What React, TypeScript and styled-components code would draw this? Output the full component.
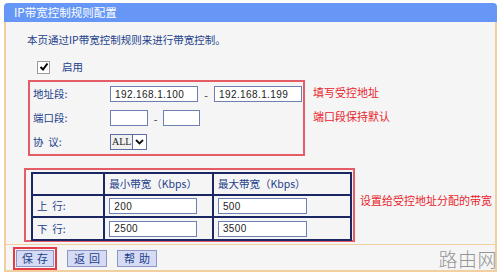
import React from 'react';
import styled, { createGlobalStyle } from 'styled-components';

const GlobalStyle = createGlobalStyle`
  body {
    margin: 0;
    background: #ffffff;
    font-family: "Noto Sans CJK SC", "Liberation Sans", sans-serif;
  }
`;

const CJK = `"Noto Sans CJK SC", "Liberation Sans", sans-serif`;
const navy = '#1b2762';
const label = '#23408a';
const red = '#e8242c';
const orange = '#f2cf9f';

const Frame = styled.div`
  width: 493px;
  margin: 3px 0 0 4px;
`;

const TitleBar = styled.div`
  height: 19px;
  background: #6797f6;
  border-radius: 4px 4px 0 0;
  color: #ffffff;
  font: 11.5px/19px ${CJK};
  padding-left: 10px;
`;

const Body = styled.div`
  height: 248px;
  background: #f5f5f5;
  border-left: 2px solid ${orange};
  border-right: 2px solid ${orange};
  border-bottom: 2px solid ${orange};
  display: flex;
  flex-direction: column;
`;

const Intro = styled.div`
  margin: 11px 0 0 21px;
  font: 10.5px/14px ${CJK};
  color: ${label};
`;

const EnableRow = styled.label`
  margin: 13px 0 0 31px;
  height: 14px;
  display: flex;
  align-items: center;
  gap: 12px;
  font: 10.5px/14px ${CJK};
  color: ${label};
`;

const CheckBox = styled.span`
  width: 11px;
  height: 11px;
  border: 1px solid #9a9a9a;
  background: #ffffff;
  display: flex;
  align-items: center;
  justify-content: center;
`;

const Section = styled.div<{ $top: number }>`
  margin-top: ${({ $top }) => $top}px;
  display: flex;
  align-items: flex-start;
`;

const RedBox = styled.div<{ $left: number; $w: number; $h: number }>`
  margin-left: ${({ $left }) => $left}px;
  width: ${({ $w }) => $w}px;
  height: ${({ $h }) => $h}px;
  box-sizing: border-box;
  border: 2px solid #e45d66;
`;

const FormRow = styled.div`
  height: 24px;
  display: flex;
  align-items: center;
  padding-left: 3px;
`;

const Label = styled.span`
  width: 77px;
  font: 10.5px/14px ${CJK};
  color: ${label};
  white-space: pre;
`;

const Input = styled.input<{ $w: number }>`
  width: ${({ $w }) => $w}px;
  height: 16px;
  box-sizing: border-box;
  border: 1px solid #6f7fb0;
  background: #ffffff;
  padding: 0 4px;
  font: 10px "Liberation Sans", sans-serif;
  letter-spacing: 0.4px;
  color: #222;
  outline: none;
`;

const Dash = styled.span<{ $w: number }>`
  width: ${({ $w }) => $w}px;
  text-align: center;
  font: 10.5px ${CJK};
  color: #333;
`;

const Select = styled.div`
  width: 37px;
  height: 16px;
  box-sizing: border-box;
  border: 1px solid #5d6d9f;
  display: flex;
  background: #f0f0f0;
`;

const SelectText = styled.span`
  width: 20px;
  font: 10px/14px "Liberation Serif", serif;
  color: #222;
  padding-left: 1px;
`;

const SelectArrow = styled.span`
  flex: 1;
  border-left: 1px solid #5d6d9f;
  background: #ffffff;
  display: flex;
  align-items: center;
  justify-content: center;
`;

const Notes = styled.div<{ $left: number }>`
  margin-left: ${({ $left }) => $left}px;
  display: flex;
  flex-direction: column;
`;

const Note = styled.div<{ $h?: number; $top?: number }>`
  height: ${({ $h }) => $h ?? 24}px;
  margin-top: ${({ $top }) => $top ?? 0}px;
  display: flex;
  align-items: center;
  font: 11px/14px ${CJK};
  color: ${red};
`;

const Table = styled.table`
  margin: 2px 0 0 5px;
  width: 321px;
  border-collapse: collapse;
  border: 2px solid ${navy};

  td {
    border: 2px solid ${navy};
    padding: 0 0 0 4px;
    font: 10.5px/14px ${CJK};
    color: ${label};
    white-space: pre;
  }
`;

const Col = styled.col<{ $w: number }>`
  width: ${({ $w }) => $w}px;
`;

const Row = styled.tr<{ $h: number }>`
  height: ${({ $h }) => $h}px;
`;

const Divider = styled.div`
  margin-top: 2px;
  border-top: 1px solid ${orange};
`;

const ButtonBar = styled.div`
  display: flex;
  align-items: center;
  gap: 10px;
  padding: 2px 0 0 7px;
`;

const Highlight = styled.div`
  border: 2px solid #e43d47;
  padding: 1px;
  display: flex;
`;

const Button = styled.button<{ $w: number }>`
  width: ${({ $w }) => $w}px;
  height: 17px;
  box-sizing: border-box;
  border: 1px solid #8e97c4;
  background: #d5dbf4;
  padding: 0;
  font: 11px/15px ${CJK};
  color: ${label};
  letter-spacing: 4px;
  text-indent: 4px;
`;

const Watermark = styled.div`
  margin-left: auto;
  margin-right: -2px;
  font: 300 19px/22px ${CJK};
  color: #959595;
  letter-spacing: 0.5px;
`;

const Chevron = () => (
  <svg width="9" height="6" viewBox="0 0 9 6">
    <polyline points="1,1 4.5,4.5 8,1" fill="none" stroke="#111" strokeWidth="1.8" />
  </svg>
);

const Check = () => (
  <svg width="10" height="10" viewBox="0 0 10 10">
    <polyline points="1.5,5 4,7.5 8.5,1.5" fill="none" stroke="#000" strokeWidth="2" />
  </svg>
);

const App = () => {
  return (
    <>
      <GlobalStyle />
      <Frame>
        <TitleBar>IP带宽控制规则配置</TitleBar>
        <Body>
          <Intro>本页通过IP带宽控制规则来进行带宽控制。</Intro>
          <EnableRow>
            <CheckBox>
              <Check />
            </CheckBox>
            启用
          </EnableRow>

          <Section $top={6}>
            <RedBox $left={22} $w={277} $h={76}>
              <FormRow>
                <Label>地址段:</Label>
                <Input $w={88} readOnly value="192.168.1.100" />
                <Dash $w={16}>-</Dash>
                <Input $w={88} readOnly value="192.168.1.199" />
              </FormRow>
              <FormRow>
                <Label>端口段:</Label>
                <Input $w={38} readOnly value="" />
                <Dash $w={15}>-</Dash>
                <Input $w={37} readOnly value="" />
              </FormRow>
              <FormRow>
                <Label>协  议:</Label>
                <Select>
                  <SelectText>ALL</SelectText>
                  <SelectArrow>
                    <Chevron />
                  </SelectArrow>
                </Select>
              </FormRow>
            </RedBox>
            <Notes $left={8}>
              <Note>填写受控地址</Note>
              <Note>端口段保持默认</Note>
            </Notes>
          </Section>

          <Section $top={12}>
            <RedBox $left={18} $w={331} $h={74}>
              <Table>
                <colgroup>
                  <Col $w={73} />
                  <Col $w={109} />
                  <Col $w={139} />
                </colgroup>
                <tbody>
                  <Row $h={22}>
                    <td />
                    <td>最小带宽（Kbps）</td>
                    <td>最大带宽（Kbps）</td>
                  </Row>
                  <Row $h={22}>
                    <td>上  行:</td>
                    <td>
                      <Input $w={88} readOnly value="200" />
                    </td>
                    <td>
                      <Input $w={89} readOnly value="500" />
                    </td>
                  </Row>
                  <Row $h={23}>
                    <td>下  行:</td>
                    <td>
                      <Input $w={88} readOnly value="2500" />
                    </td>
                    <td>
                      <Input $w={89} readOnly value="3500" />
                    </td>
                  </Row>
                </tbody>
              </Table>
            </RedBox>
            <Notes $left={5}>
              <Note $h={14} $top={25}>
                设置给受控地址分配的带宽
              </Note>
            </Notes>
          </Section>

          <Divider />
          <ButtonBar>
            <Highlight>
              <Button $w={38}>保存</Button>
            </Highlight>
            <Button $w={40}>返回</Button>
            <Button $w={40}>帮助</Button>
            <Watermark>路由网</Watermark>
          </ButtonBar>
        </Body>
      </Frame>
    </>
  );
};

export default App;
